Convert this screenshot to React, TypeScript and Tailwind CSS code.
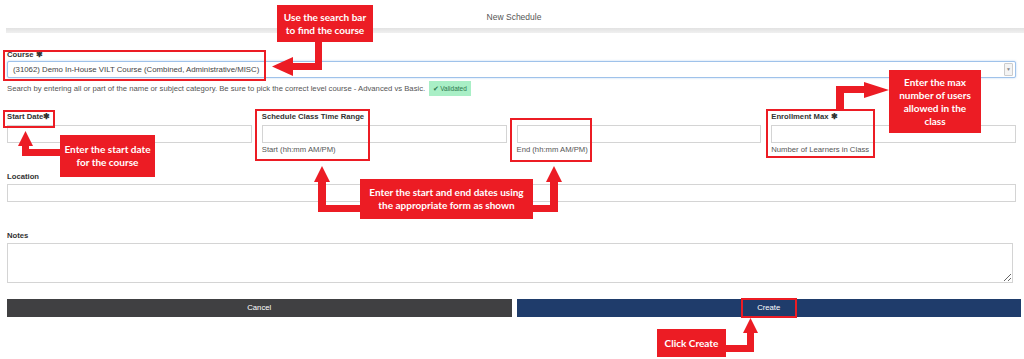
import React from "react";

const RED = "bg-[#ec1c24]";

function Note({ className, children }: { className: string; children: React.ReactNode }) {
  return (
    <div
      className={`absolute ${RED} flex flex-col items-center justify-center text-center text-white font-bold font-['Lato','Open_Sans',sans-serif] text-[10px] leading-[13px] ${className}`}
    >
      {children}
    </div>
  );
}

function Hl({ className }: { className: string }) {
  return <div className={`absolute border-2 border-[#ec1c24] ${className}`} />;
}

export default function App() {
  return (
    <div className="relative w-[1024px] h-[359px] overflow-hidden bg-white font-['Liberation_Sans',Arial,sans-serif] text-[#333]">
      {/* header */}
      <div className="h-[28px] pt-[6px] flex items-center justify-center pl-[4px] text-[8.5px] text-[#555]">
        New Schedule
      </div>
      <div className="ml-[6px] h-[5px] bg-gradient-to-b from-[#e2e2e2] to-[#f0f0f0]" />

      {/* form */}
      <div className="pl-[7px] pr-[8px]">
        <div className="mt-[17px] h-[10px] leading-[10px] text-[7.7px] font-bold">
          Course <span className="text-[8px]">✱</span>
        </div>
        <div className="mt-[1px] h-[17px] flex items-center border border-[#9fc2ea] rounded-[2px] shadow-[0_0_2px_rgba(102,160,230,0.5)] bg-white">
          <span className="pl-[5px] flex-1 text-[7.8px] text-[#444]">
            (31062) Demo In-House VILT Course (Combined, Administrative/MISC)
          </span>
          <span className="mr-[2px] w-[9px] h-[13px] flex items-center justify-center border border-[#ccc] rounded-[1px] bg-[#f4f4f4] text-[5px] text-[#888]">
            ▼
          </span>
        </div>
        <div className="mt-[3px] h-[15px] flex items-center text-[7.7px] text-[#555]">
          <span>
            Search by entering all or part of the name or subject category. Be sure to pick the correct level course - Advanced vs Basic.
          </span>
          <span className="ml-[4px] h-[15px] px-[4px] flex items-center bg-[#a9efc6] text-[#2d7a4c] text-[6.5px]">
            <span className="mr-[1px]">✔</span>Validated
          </span>
        </div>

        <div className="mt-[16px] grid grid-cols-4 gap-x-[10px]">
          <div>
            <div className="h-[10px] leading-[10px] text-[7.7px] font-bold">
              Start Date<span className="text-[8px]">✱</span>
            </div>
            <div className="mt-[3px] h-[18px] border border-[#d4d4d4]" />
          </div>
          <div>
            <div className="h-[10px] leading-[10px] text-[7.7px] font-bold">Schedule Class Time Range</div>
            <div className="mt-[3px] h-[18px] border border-[#d4d4d4]" />
            <div className="mt-[2px] h-[10px] leading-[10px] text-[7.7px] text-[#555]">Start (hh:mm AM/PM)</div>
          </div>
          <div>
            <div className="h-[10px]" />
            <div className="mt-[3px] h-[18px] border border-[#d4d4d4]" />
            <div className="mt-[2px] h-[10px] leading-[10px] text-[7.7px] text-[#555]">End (hh:mm AM/PM)</div>
          </div>
          <div>
            <div className="h-[10px] leading-[10px] text-[7.7px] font-bold">
              Enrollment Max <span className="text-[8px]">✱</span>
            </div>
            <div className="mt-[3px] h-[18px] border border-[#d4d4d4]" />
            <div className="mt-[2px] h-[10px] leading-[10px] text-[7.7px] text-[#555]">Number of Learners in Class</div>
          </div>
        </div>

        <div className="mt-[17px] h-[10px] leading-[10px] text-[7.7px] font-bold">Location</div>
        <div className="mt-[2px] h-[18px] border border-[#d4d4d4]" />

        <div className="mt-[29px] h-[10px] leading-[10px] text-[7.7px] font-bold">Notes</div>
        <textarea
          readOnly
          className="block mt-[2px] w-[1006px] h-[40px] border border-[#d4d4d4] resize"
        />

        <div className="mt-[16px] w-[1014px] h-[18px] flex gap-[5px] text-[7.7px] text-white">
          <div className="flex-1 bg-[#404042] flex items-center justify-center">Cancel</div>
          <div className="flex-1 bg-[#1f3c6b] flex items-center justify-center">Create</div>
        </div>
      </div>

      {/* highlight boxes */}
      <Hl className="left-[3px] top-[50px] w-[263px] h-[31px]" />
      <Hl className="left-[3px] top-[110px] w-[52px] h-[18px]" />
      <Hl className="left-[255px] top-[109px] w-[115px] h-[52px]" />
      <Hl className="left-[510px] top-[118px] w-[82px] h-[44px]" />
      <Hl className="left-[766px] top-[109px] w-[109px] h-[49px]" />
      <Hl className="left-[741px] top-[298px] w-[56px] h-[20px]" />

      {/* arrows */}
      <svg className="absolute left-0 top-0" width="1024" height="359" viewBox="0 0 1024 359">
        <g fill="#ec1c24">
          <rect x="315" y="40" width="7" height="30" />
          <rect x="290" y="63" width="32" height="7" />
          <polygon points="293,57 293,76 272,66.5" />
          <rect x="22" y="144" width="7" height="12" />
          <rect x="22" y="149" width="40" height="7" />
          <polygon points="18,146 33,146 25.5,131" />
          <rect x="318" y="180" width="8" height="32" />
          <rect x="318" y="205" width="44" height="7" />
          <polygon points="314,182 330,182 322,166" />
          <rect x="550" y="180" width="8" height="32" />
          <rect x="531" y="205" width="27" height="7" />
          <polygon points="546,182 562,182 554,166" />
          <rect x="836" y="86" width="8" height="25" />
          <rect x="836" y="86" width="30" height="7" />
          <polygon points="864,82 864,98 889,90" />
          <rect x="747" y="330" width="7" height="22" />
          <rect x="724" y="345" width="30" height="7" />
          <polygon points="743,333 758,333 750.5,318" />
        </g>
      </svg>

      {/* annotation boxes */}
      <Note className="left-[277px] top-[5px] w-[96px] h-[37px]">
        <div>Use the search bar</div>
        <div>to find the course</div>
      </Note>
      <Note className="left-[60px] top-[135px] w-[95px] h-[42px]">
        <div>Enter the start date</div>
        <div>for the course</div>
      </Note>
      <Note className="left-[360px] top-[179px] w-[173px] h-[40px]">
        <div>Enter the start and end dates using</div>
        <div>the appropriate form as shown</div>
      </Note>
      <Note className="left-[889px] top-[70px] w-[92px] h-[63px]">
        <div>Enter the max</div>
        <div>number of users</div>
        <div>allowed in the</div>
        <div>class</div>
      </Note>
      <Note className="left-[657px] top-[329px] w-[69px] h-[28px]">
        <div>Click Create</div>
      </Note>
    </div>
  );
}
